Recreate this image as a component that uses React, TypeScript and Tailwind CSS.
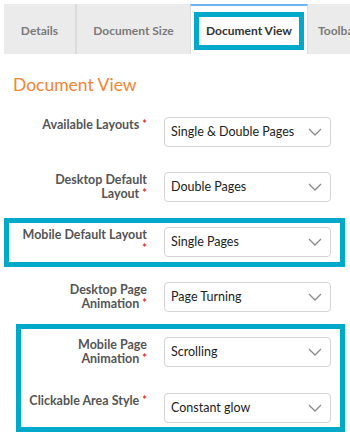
import React from 'react';

const font = { fontFamily: 'Lato, "Open Sans", Arial, sans-serif' };

function Chevron() {
  return (
    <svg width="14" height="8" viewBox="0 0 14 8" fill="none" className="shrink-0">
      <path d="M1 1l6 6 6-6" stroke="#8a8a8a" strokeWidth="1.3" />
    </svg>
  );
}

function Tab({ label, active, w }: { label: string; active?: boolean; w: string }) {
  return (
    <div
      className={`${w} h-[50px] shrink-0 flex justify-center pt-[6px] pb-[4px] border-t-2 ${
        active
          ? 'bg-white border-t-[#6fb3f2] border-x border-x-[#dedede] px-[3px]'
          : 'border-t-transparent'
      }`}
    >
      <span
        className={`h-[38px] w-full flex items-center justify-center whitespace-nowrap text-[12px] font-bold border-[5px] ${
          active ? 'border-[#00a9c9] text-[#333]' : 'border-transparent text-[#7a7a7a]'
        }`}
      >
        {label}
      </span>
    </div>
  );
}

function Row({ label, value, className = '' }: { label: React.ReactNode; value: string; className?: string }) {
  return (
    <div className={`flex items-start ${className}`}>
      <div className="w-[126px] shrink-0 text-right text-[12.5px] leading-[14px] font-bold text-[#555] pt-[1px]">
        {label}
      </div>
      <div className="ml-[17px] w-[167px] h-[30px] shrink-0 flex items-center justify-between rounded-[4px] border border-[#d4d4d4] bg-white pl-[6px] pr-[8px] text-[12.5px] text-[#222]">
        <span className="whitespace-nowrap">{value}</span>
        <Chevron />
      </div>
    </div>
  );
}

function Req() {
  return <span className="text-[#d9342b] text-[11px] align-top leading-[12px]">*</span>;
}

export default function App() {
  return (
    <div className="w-[350px] h-[433px] overflow-hidden bg-white" style={font}>
      <div className="mt-[4px] ml-[4px] flex h-[50px] bg-[#ebebeb] overflow-hidden">
        <Tab label="Details" w="w-[71px]" />
        <div className="w-[2px] shrink-0 bg-[#dcdcdc]" />
        <Tab label="Document Size" w="w-[113px]" />
        <Tab label="Document View" active w="w-[118px]" />
        <Tab label="Toolbar" w="w-[60px]" />
      </div>

      <h2 className="ml-[13px] mt-[20px] text-[17.5px] leading-[22px] text-[#ef8632]">Document View</h2>

      <div className="pl-[21px]">
        <Row
          className="mt-[21px]"
          label={
            <>
              Available Layouts <Req />
            </>
          }
          value="Single & Double Pages"
        />
        <Row
          className="mt-[25px]"
          label={
            <>
              Desktop Default Layout <Req />
            </>
          }
          value="Double Pages"
        />
      </div>

      <div className="ml-[4px] w-[341px] mt-[16px] border-[5px] border-[#00a9c9] pl-[12px] pt-[4px] pb-[5px]">
        <Row
          label={
            <>
              Mobile Default Layout <Req />
            </>
          }
          value="Single Pages"
        />
      </div>

      <div className="pl-[21px]">
        <Row
          className="mt-[15px]"
          label={
            <>
              Desktop Page Animation <Req />
            </>
          }
          value="Page Turning"
        />
      </div>

      <div className="ml-[16px] w-[329px] mt-[12px] border-[5px] border-[#00a9c9] pt-[8px] pb-[4px]">
        <Row
          label={
            <>
              Mobile Page Animation <Req />
            </>
          }
          value="Scrolling"
        />
        <Row
          className="mt-[26px]"
          label={
            <span className="whitespace-nowrap">
              Clickable Area Style <Req />
            </span>
          }
          value="Constant glow"
        />
      </div>
    </div>
  );
}
